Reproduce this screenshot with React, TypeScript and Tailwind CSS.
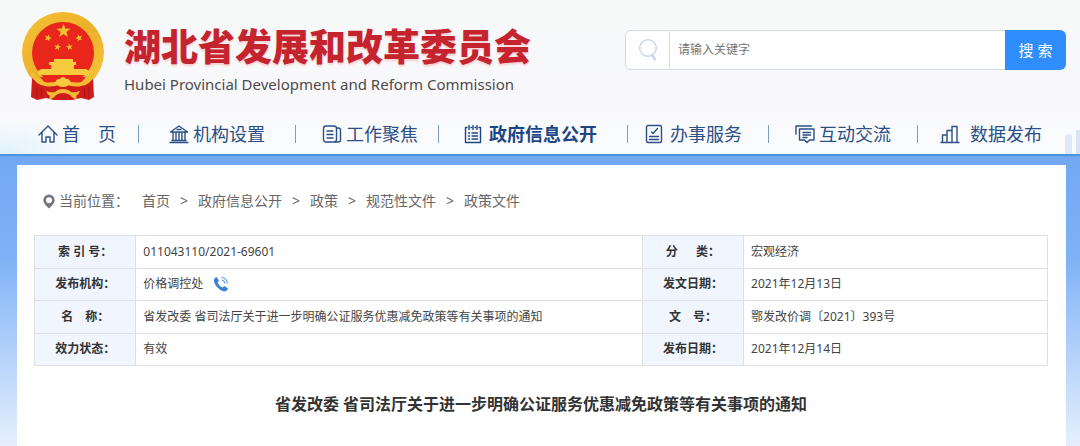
import React from "react";

interface NavItem {
  label: string;
  icon: React.ReactNode;
  className: string;
  active?: boolean;
}

interface IconProps {
  children: React.ReactNode;
  className?: string;
}

const star = (cx: number, cy: number, r: number, turn = 0) =>
  Array.from({ length: 10 }, (_, i) => {
    const radius = i % 2 ? r * 0.4 : r;
    const angle = (Math.PI / 5) * i - Math.PI / 2 + turn;
    return `${(cx + radius * Math.cos(angle)).toFixed(2)},${(
      cy +
      radius * Math.sin(angle)
    ).toFixed(2)}`;
  }).join(" ");

const Icon = ({ children, className = "w-5" }: IconProps) => (
  <svg
    viewBox="0 0 20 20"
    className={`h-5 shrink-0 ${className}`}
    fill="none"
    stroke="currentColor"
    strokeWidth="1.4"
    strokeLinejoin="round"
    strokeLinecap="round"
    aria-hidden="true">
    {children}
  </svg>
);

const Emblem = () => (
  <svg viewBox="0 0 82 90" className="h-[90px] w-[82px] shrink-0" aria-hidden="true">
    <defs>
      <linearGradient id="gold" x1="0" y1="0" x2="1" y2="1">
        <stop offset="0" stopColor="#f5c336" />
        <stop offset="0.5" stopColor="#ecb02a" />
        <stop offset="1" stopColor="#f6c93c" />
      </linearGradient>
    </defs>
    <ellipse cx="41" cy="40.500" rx="41" ry="40.500" fill="url(#gold)" />
    <circle cx="41" cy="41" r="31" fill="#e8261c" />
    <g fill="#f3c02f">
      <polygon points={star(41.5, 19, 7.5)} />
      <polygon points={star(26, 26, 3.8, 0.3)} />
      <polygon points={star(57, 26, 3.8, -0.3)} />
      <polygon points={star(35.5, 35, 3.6, 0.2)} />
      <polygon points={star(47.5, 35, 3.6, -0.2)} />
    </g>
    <path
      d="M32 47h19v3h3v3h-2v4h12l3 2v4H16v-4l3-2h10v-4h-2v-3h5z"
      fill="#f7cb3e"
    />
    <path d="M10 66 9 85l6 3 9-2 8 2h18l9-2 8 2 5-3-1-19-12 7-18-1-18 1z" fill="#cf1d1c" />
    <path d="M18 65h46l-7 8H25z" fill="#e8261c" />
    <path
      d="M10 61q5 11 15 11.500 8 .5 15-3M72 61q-5 11-15 11.500-8 .5-15-3"
      fill="none"
      stroke="#f2bd33"
      strokeWidth="4"
    />
    <path d="M33 71q2-5 5-4 1-2 3-2t3 2q3-1 5 4-3 4-8 4t-8-4z" fill="#f7c93e" />
    <path
      d="M24 79q5 2 9 1 3-3 8-3t8 3q4 1 9-1-1 3-4 5l1 3q-4 0-7-4-3-2-7-2t-7 2q-3 4-7 4l1-3q-3-2-4-5z"
      fill="#f2bd35"
    />
    <path d="M15 74v12M20 76l-1 9M67 74v12M62 76l1 9" stroke="#ab1416" strokeWidth="1" />
  </svg>
);

const navItems: NavItem[] = [
  {
    label: "首\u3000页",
    className: "gap-1 pr-[22px]",
    icon: (
      <Icon>
        <path d="M1 11 10 2l9 9M4 8.500V18h4v-5h4v5h4V8.500" />
      </Icon>
    ),
  },
  {
    label: "机构设置",
    className: "gap-1 pl-[30px] pr-[30px]",
    icon: (
      <Icon>
        <path d="M1.500 8 10 2l8.500 6zM1 18.500h18M3 16.500h14M4 8v8M7 8v8M10 8v8M13 8v8M16 8v8" />
        <path d="M8 5.500h4" />
      </Icon>
    ),
  },
  {
    label: "工作聚焦",
    className: "gap-1 pl-[26px] pr-5",
    icon: (
      <Icon>
        <rect x="1.500" y="2" width="13" height="16" rx="2.500" />
        <path d="M15 4h1.500Q18.500 4 18.500 6v10q0 2-2 2H13M5 7h6M5 10.500h6M5 14h6" />
      </Icon>
    ),
  },
  {
    label: "政府信息公开",
    className: "gap-1.5 pl-6 pr-[30px]",
    active: true,
    icon: (
      <Icon>
        <path d="M2.500 3.500v15h15v-15M6 1.500v4M10 1.500v4M14 1.500v4M2.500 3.500h1.500M16 3.500h1.500M8 3.500h.5M12 3.500h.5" />
        <path d="M5.500 9h1M9 9h5.500M5.500 12h1M9 12h5.500M5.500 15h1M9 15h5.500" />
      </Icon>
    ),
  },
  {
    label: "办事服务",
    className: "gap-1.5 pl-4 pr-[26px]",
    icon: (
      <Icon>
        <rect x="2.500" y="1.500" width="15" height="17" rx="1.500" />
        <path d="M7.500 8 9 9.500l4.500-5M5.500 12.500h9M5.500 15.500h9" />
      </Icon>
    ),
  },
  {
    label: "互动交流",
    className: "gap-1 pl-[26px] pr-[26px]",
    icon: (
      <Icon>
        <path d="M1 10V2h15.500" />
        <path d="M4.500 5H19v11h-4.500L12 18.500 9.500 16h-5zM8 8.500h7.500M8 11h7.500M8 13.500h4" />
      </Icon>
    ),
  },
  {
    label: "数据发布",
    className: "gap-2.5 pl-[22px]",
    icon: (
      <Icon>
        <path d="M1 18.500h18M2.500 18V11H7M7 18V6.500h5M12 18V2.500h5V18" />
      </Icon>
    ),
  },
];

const crumbs = ["首页", "政府信息公开", "政策", "规范性文件", "政策文件"];

const rows = [
  ["索 引 号：", "011043110/2021-69601", "分\u3000  类：", "宏观经济"],
  ["发布机构：", "价格调控处", "发文日期：", "2021年12月13日"],
  [
    "名\u3000称：",
    "省发改委 省司法厅关于进一步明确公证服务优惠减免政策等有关事项的通知",
    "文\u3000号：",
    "鄂发改价调〔2021〕393号",
  ],
  ["效力状态：", "有效", "发布日期：", "2021年12月14日"],
];

const PhoneIcon = () => (
  <svg viewBox="0 0 16 16" className="ml-2.5 size-4 shrink-0" aria-label="电话">
    <path
      d="M3.500 1 6 4.500 4.500 6.500q1.500 3.500 5 5L11.500 10l3.500 2.500q-1 3-4 3Q7.500 15 4 11 0 6 1.200 3 2 1.300 3.500 1z"
      fill="#3b82d6"
    />
    <path
      d="M8.500 1.500q5 .5 6 6M8.500 4q3 .5 3.500 3.500"
      fill="none"
      stroke="#5b9be2"
      strokeWidth="1.200"
    />
  </svg>
);

const SearchForm = () => (
  <form
    className="mt-[30px] flex h-10 w-[441px] shrink-0"
    onSubmit={(e) => e.preventDefault()}>
    <label
      htmlFor="keyword"
      className="flex w-[45px] items-center justify-center rounded-l-md border border-[#d3dae2] bg-white">
      <svg
        viewBox="0 0 20 24"
        className="h-6 w-5"
        fill="none"
        stroke="#d0d6ec"
        strokeLinecap="round"
        aria-label="关键字">
        <circle cx="10" cy="10" r="8.300" strokeWidth="1.600" />
        <path d="m14 17 3 4.500" strokeWidth="2.400" />
      </svg>
    </label>
    <input
      id="keyword"
      type="text"
      placeholder="请输入关键字"
      className="min-w-0 flex-1 border-y border-[#d3dae2] bg-white px-2 text-xs text-[#555] outline-none placeholder:text-[#757575]"
    />
    <button
      type="submit"
      className="w-[61px] rounded-r-md bg-[#2f8dfd] text-[15px] text-white">
      搜 索
    </button>
  </form>
);

const Header = () => (
  <header className="relative border-b-2 border-[#4a93e0] bg-linear-to-b from-[#f7f9f8] via-[#f8f8fb] via-60% to-[#fbfcfd]">
    <div className="absolute bottom-0 left-0 h-9 w-20 bg-radial-[at_0%_100%] from-[#e0f1fd] to-transparent to-70%" />
    <div className="absolute bottom-0 right-0 flex items-end gap-1">
      <div className="h-5 w-[7px] rounded-t bg-[#e0e9f8]" />
      <div className="h-6 w-1 bg-[#d8e5f8]" />
    </div>
    <div className="flex h-28 justify-between pl-[22px] pr-3.5">
      <div className="flex gap-5">
        <div className="pt-3">
          <Emblem />
        </div>
        <div className="pt-6">
          <h1 className="whitespace-nowrap text-[37px] font-black leading-[46px] text-[#c5242f] [text-shadow:0_2px_2px_#f3cfd2]">
            湖北省发展和改革委员会
          </h1>
          <p className="whitespace-nowrap text-[15px] leading-7 text-[#4c4c4c]">
            Hubei Provincial Development and Reform Commission
          </p>
        </div>
      </div>
      <SearchForm />
    </div>
    <nav className="relative h-[42px] pl-[38px]">
      <ul className="flex h-11 items-center text-lg text-[#2b4f86]">
        {navItems.map((item, i) => (
          <React.Fragment key={item.label}>
            {i > 0 && <li className="h-[18px] w-px bg-[#7f9dc4]" aria-hidden="true" />}
            <li>
              <a
                href="#"
                className={`flex items-center whitespace-nowrap ${item.className} ${
                  item.active ? "font-bold text-[#1c4584]" : ""
                }`}>
                {item.icon}
                {item.label}
              </a>
            </li>
          </React.Fragment>
        ))}
      </ul>
    </nav>
  </header>
);

const Breadcrumb = () => (
  <nav className="flex items-center pl-[9px] text-sm leading-6 text-[#666]">
    <svg viewBox="0 0 12 15" className="mr-1 h-[15px] w-3" aria-hidden="true">
      <path
        fillRule="evenodd"
        fill="#757582"
        d="M6 .5a5.700 5.700 0 0 0-5.700 5.700C.3 9.700 6 14.500 6 14.500s5.700-4.800 5.700-8.300A5.700 5.700 0 0 0 6 .5zM6 3.200a3 3 0 1 1 0 6 3 3 0 0 1 0-6z"
      />
    </svg>
    <span className="mr-[13px]">当前位置：</span>
    <ol className="flex">
      {crumbs.map((crumb, i) => (
        <li key={crumb} className="flex">
          {i > 0 && <span className="w-7 text-center">&gt;</span>}
          <a href="#">{crumb}</a>
        </li>
      ))}
    </ol>
  </nav>
);

const InfoTable = () => (
  <table className="mt-[22px] h-[131px] w-full table-fixed border-collapse text-xs text-[#444]">
    <colgroup>
      <col className="w-[10%]" />
      <col className="w-[50%]" />
      <col className="w-[10%]" />
      <col className="w-[30%]" />
    </colgroup>
    <tbody>
      {rows.map((row) => (
        <tr key={row[0]}>
          {row.map((cell, i) =>
            i % 2 === 0 ? (
              <th
                key={i}
                scope="row"
                className="whitespace-pre border border-[#dcdfe4] bg-[#f1f5fe] text-center font-bold text-[#333]">
                {cell}
              </th>
            ) : (
              <td key={i} className="border border-[#dcdfe4] px-[7px]">
                <div className="flex items-center">
                  {cell}
                  {cell === "价格调控处" && <PhoneIcon />}
                </div>
              </td>
            )
          )}
        </tr>
      ))}
    </tbody>
  </table>
);

const App = () => {
  return (
    <div className="flex min-h-screen flex-col bg-[#e6f0fc] font-['Noto_Sans','Noto_Sans_CJK_SC',sans-serif]">
      <Header />
      <div className="flex flex-1 flex-col bg-linear-to-b from-[#72a8f3] via-[#7fb2f6] via-35% to-[#e8f1fc] pl-[17px] pr-3.5 pt-[9px]">
        <main className="flex-1 bg-white pb-8 pl-[17px] pr-[18px] pt-6">
          <Breadcrumb />
          <InfoTable />
          <h2 className="mt-6 text-center text-base font-bold leading-7 text-[#333]">
            省发改委 省司法厅关于进一步明确公证服务优惠减免政策等有关事项的通知
          </h2>
        </main>
      </div>
    </div>
  );
};

export default App;
